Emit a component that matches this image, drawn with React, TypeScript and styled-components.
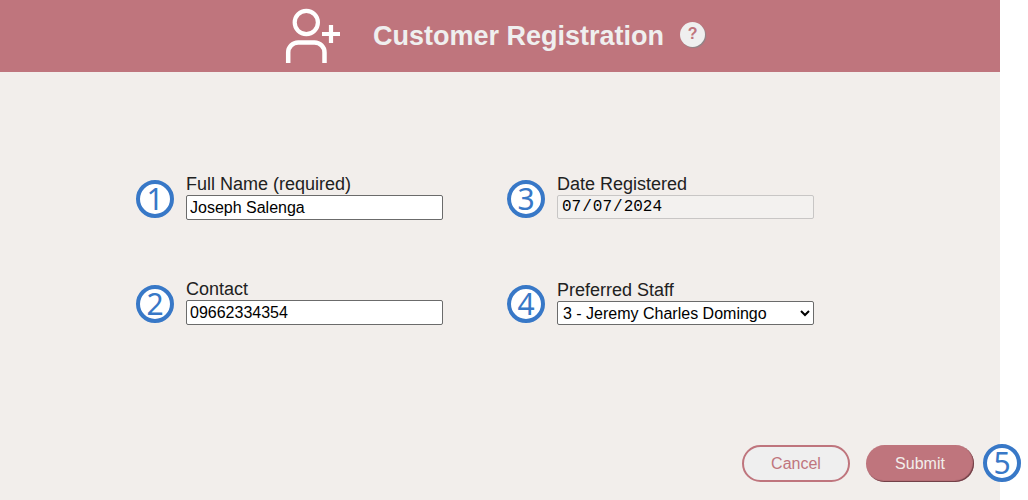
import React, { useState } from "react";
import styled, { createGlobalStyle, css } from "styled-components";

const GlobalStyle = createGlobalStyle`
  *, *::before, *::after { box-sizing: border-box; }
  body {
    margin: 0;
    background: #ffffff;
    font-family: "Liberation Sans", Arial, sans-serif;
  }
`;

const Page = styled.div`
  min-height: 100vh;
  display: flex;
  padding-right: 28px;
`;

const Panel = styled.main`
  flex: 1;
  min-width: 0;
  display: flex;
  flex-direction: column;
  background: #f2eeeb;
`;

const Header = styled.header`
  display: flex;
  align-items: center;
  justify-content: center;
  height: 72px;
  padding-right: 10px;
  background: #bf757d;
`;

const Title = styled.h1`
  margin: 0 16px 0 32px;
  font-size: 27px;
  line-height: 32px;
  font-weight: bold;
  color: #efefef;
  white-space: nowrap;
`;

const HelpButton = styled.button`
  width: 25px;
  height: 25px;
  margin-bottom: 4px;
  padding: 0;
  border: 0;
  border-radius: 50%;
  background: #efefef;
  box-shadow: 1px 1px 1px #8d8588;
  color: #bf757d;
  font: bold 16px/24px "Liberation Sans", Arial, sans-serif;
`;

const Form = styled.form`
  flex: 1;
  display: flex;
  flex-direction: column;
  justify-content: space-between;
`;

const Fields = styled.div`
  display: grid;
  grid-template-columns: repeat(2, minmax(0, 1fr));
  gap: 59px 64px;
  padding: 102px 186px 40px 136px;
`;

const FieldRow = styled.div`
  display: flex;
  align-items: flex-end;
  gap: 12px;
`;

const Field = styled.div`
  flex: 1;
  min-width: 0;
  display: flex;
  flex-direction: column;
`;

const Label = styled.label`
  font-size: 18px;
  line-height: 21px;
  color: #212121;
  white-space: nowrap;
`;

const control = css`
  width: 100%;
  height: 25px;
  margin: 0;
  border: 1px solid #6b6b6b;
  border-radius: 2px;
  background: #ffffff;
  color: #000000;
  font: 16px "Liberation Sans", Arial, sans-serif;
`;

const TextInput = styled.input`
  ${control}
  padding: 1px 3px;
`;

const DateInput = styled.input`
  ${control}
  height: 24px;
  margin-bottom: 1px;
  padding: 0 3px;
  border-color: #c8c6c5;
  background: #f3f1ef;
  font-family: "Liberation Mono", "Courier New", monospace;

  &::-webkit-calendar-picker-indicator {
    display: none;
  }
`;

const Select = styled.select`
  ${control}
  height: 24px;
  padding: 0 1px;
`;

const Badge = styled.span`
  flex: none;
  width: 38px;
  height: 38px;
  margin-bottom: 2px;
  border: 4px solid #3878c7;
  border-radius: 50%;
  background: #ffffff;
  color: #3878c7;
  font: 400 30px/30px "Noto Sans", "Open Sans", sans-serif;
  text-align: center;
`;

const Actions = styled.div`
  position: relative;
  display: flex;
  justify-content: flex-end;
  gap: 16px;
  padding: 0 26px 18px;
`;

const SubmitBadge = styled(Badge)`
  position: absolute;
  right: -21px;
  bottom: 16px;
`;

const Button = styled.button<{ $primary?: boolean }>`
  width: 108px;
  height: 37px;
  padding: 0;
  border-radius: 19px;
  font: 16px "Liberation Sans", Arial, sans-serif;
  ${({ $primary }) =>
    $primary
      ? css`
          border: 0;
          background: #bf757d;
          color: #f2eeeb;
          box-shadow: inset -1px -1px 1px #6b3c43;
        `
      : css`
          border: 2px solid #bf757d;
          background: #efefef;
          color: #bf757d;
        `}
`;

const AddUserIcon = () => (
  <svg width="56" height="56" viewBox="0 0 56 56" fill="none" stroke="#ffffff" aria-hidden="true">
    <circle cx="21.3" cy="14.5" r="11.6" strokeWidth="4.2" />
    <path d="M3.2 55V44.5a10 10 0 0 1 10-10h16.3a10 10 0 0 1 10 10V55" strokeWidth="4.5" />
    <path d="M46 17v18M37 26h18" strokeWidth="4.2" />
  </svg>
);

export default function App() {
  const [name, setName] = useState("Joseph Salenga");
  const [contact, setContact] = useState("09662334354");

  return (
    <>
      <GlobalStyle />
      <Page>
        <Panel>
          <Header>
            <AddUserIcon />
            <Title>Customer Registration</Title>
            <HelpButton type="button">?</HelpButton>
          </Header>
          <Form onSubmit={(e) => e.preventDefault()}>
            <Fields>
              <FieldRow>
                <Badge>1</Badge>
                <Field>
                  <Label htmlFor="name">Full Name (required)</Label>
                  <TextInput id="name" required value={name} onChange={(e) => setName(e.target.value)} />
                </Field>
              </FieldRow>
              <FieldRow>
                <Badge>3</Badge>
                <Field>
                  <Label htmlFor="date">Date Registered</Label>
                  <DateInput id="date" type="date" readOnly value="2024-07-07" />
                </Field>
              </FieldRow>
              <FieldRow>
                <Badge>2</Badge>
                <Field>
                  <Label htmlFor="contact">Contact</Label>
                  <TextInput id="contact" type="tel" value={contact} onChange={(e) => setContact(e.target.value)} />
                </Field>
              </FieldRow>
              <FieldRow>
                <Badge>4</Badge>
                <Field>
                  <Label htmlFor="staff">Preferred Staff</Label>
                  <Select id="staff" defaultValue="3">
                    <option value="3">3 - Jeremy Charles Domingo</option>
                  </Select>
                </Field>
              </FieldRow>
            </Fields>
            <Actions>
              <Button type="button">Cancel</Button>
              <Button type="submit" $primary>Submit</Button>
              <SubmitBadge>5</SubmitBadge>
            </Actions>
          </Form>
        </Panel>
      </Page>
    </>
  );
}
